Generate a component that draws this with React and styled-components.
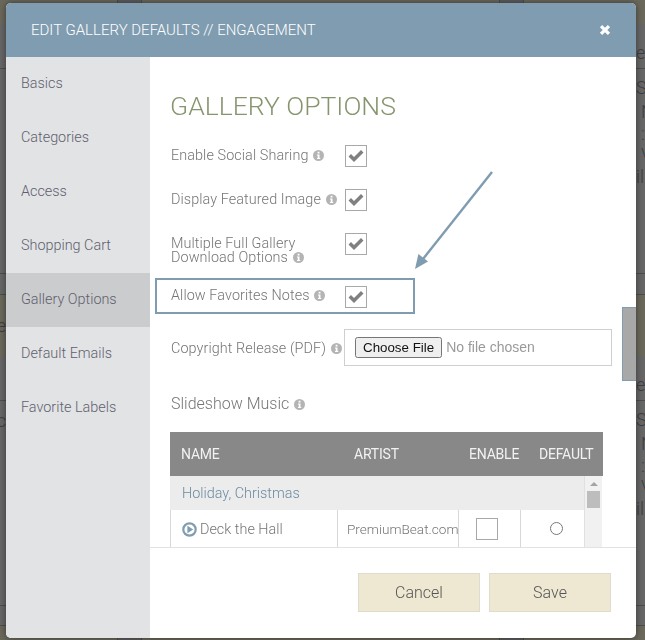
import React from 'react'
import styled, { createGlobalStyle } from 'styled-components'

const GlobalStyle = createGlobalStyle`
  html, body {
    margin: 0;
    padding: 0;
    height: 100%;
    overflow: hidden;
    background: #5e5d58;
  }
  body {
    font-family: Roboto, "Liberation Sans", sans-serif;
  }
`

const NAV_ITEMS = ['Basics', 'Categories', 'Access', 'Shopping Cart', 'Gallery Options', 'Default Emails', 'Favorite Labels']

function InfoIcon() {
  return (
    <InfoSvg viewBox="0 0 10 10">
      <circle cx="5" cy="5" r="5" fill="#b4b4b4" />
      <rect x="4.2" y="1.6" width="1.7" height="1.6" fill="#fff" />
      <path d="M3.6 4h2.3v3.2h.7v1H3.6v-1h.7V5h-.7z" fill="#fff" />
    </InfoSvg>
  )
}

function CheckMark() {
  return (
    <svg width="16" height="14" viewBox="0 0 16 14">
      <path d="M.5 7.5L3 5l3 3 7-7 2.5 2.5L6 13z" fill="#808080" />
    </svg>
  )
}

function PlayIcon() {
  return (
    <svg width="15" height="15" viewBox="0 0 15 15">
      <circle cx="7.5" cy="7.5" r="6.2" fill="none" stroke="#7f9cb0" strokeWidth="2.2" />
      <path d="M5.4 3.8l5.8 3.7-5.8 3.7z" fill="#7f9cb0" />
    </svg>
  )
}

function Option({ label, highlight, tall }) {
  return (
    <OptionRow $highlight={highlight} $tall={tall}>
      <OptionLabel $top={highlight ? 3 : 4}>
        {label} <InfoIcon />
      </OptionLabel>
      <CheckBox><CheckMark /></CheckBox>
    </OptionRow>
  )
}

function EdgeNotes() {
  return (
    <EdgeText $pad={7}>
      <Note $h={24}>S</Note>
      <Note $h={24} $inset={5}>N</Note>
      <Note $h={20} $inset={5}>:</Note>
      <Note $h={16} $inset={5}>v</Note>
      <Note $h={34}>il</Note>
    </EdgeText>
  )
}

// the dimmed page that shows beside the modal
function Backdrop() {
  return (
    <Page>
      <Band $h={24} $tone="brown">
        <TopCell $left={117} />
        <TopCell $left={499} />
      </Band>
      <Band $h={45} $line>
        <EdgeText><Note $h={58}>e</Note></EdgeText>
      </Band>
      <Band $h={205} $line>
        <EdgeNotes />
      </Band>
      <Band $h={21} $line />
      <Band $h={61} $tone="brown">
        <LeftText>e</LeftText>
      </Band>
      <Band $h={45} $line>
        <EdgeText><Note $h={58}>e</Note></EdgeText>
      </Band>
      <Band $h={205} $line>
        <LeftText $h={38}>c</LeftText>
        <EdgeNotes />
      </Band>
      <Band $h={20} $line />
      <Band $h={14} $tone="brown">
        <TopCell $left={117} />
        <TopCell $left={499} />
      </Band>
    </Page>
  )
}

export default function App() {
  return (
    <>
      <GlobalStyle />
      <Backdrop />
      <Modal>
        <Header>
          <Title>EDIT GALLERY DEFAULTS // ENGAGEMENT</Title>
          <Close viewBox="0 0 12 12">
            <path d="M.9 3.2l2.3-2.3L6 3.7 8.8.9l2.3 2.3L8.3 6l2.8 2.8-2.3 2.3L6 8.3l-2.8 2.8L.9 8.8 3.7 6z" fill="#fff" />
          </Close>
        </Header>
        <Body>
          <Sidebar>
            {NAV_ITEMS.map((item) => (
              <NavItem key={item} $active={item === 'Gallery Options'}>{item}</NavItem>
            ))}
          </Sidebar>
          <Main>
            <Content>
              <Heading>GALLERY OPTIONS</Heading>
              <Option label="Enable Social Sharing" />
              <Option label="Display Featured Image" />
              <Option label={<>Multiple Full Gallery<br />Download Options</>} tall />
              <Option label="Allow Favorites Notes" highlight />
              <FileRow>
                <OptionLabel $top={2}>Copyright Release (PDF) <InfoIcon /></OptionLabel>
                <FileBox><input type="file" /></FileBox>
              </FileRow>
              <SubHeading>Slideshow Music <InfoIcon /></SubHeading>
              <MusicTable>
                <TableHead>
                  <HeadCell>NAME</HeadCell>
                  <HeadCell>ARTIST</HeadCell>
                  <HeadCell>ENABLE</HeadCell>
                  <HeadCell>DEFAULT</HeadCell>
                </TableHead>
                <TableBody>
                  <Rows>
                    <GroupRow>Holiday, Christmas</GroupRow>
                    <TrackRow>
                      <TrackCell><PlayIcon /> Deck the Hall</TrackCell>
                      <ArtistCell>PremiumBeat.com</ArtistCell>
                      <BoxCell><EmptyBox /></BoxCell>
                      <RadioCell><Radio /></RadioCell>
                    </TrackRow>
                  </Rows>
                  <ScrollTrack>
                    <ScrollArrow />
                    <ScrollThumb />
                  </ScrollTrack>
                </TableBody>
              </MusicTable>
            </Content>
            <Footer>
              <FooterButton>Cancel</FooterButton>
              <FooterButton>Save</FooterButton>
            </Footer>
          </Main>
        </Body>
      </Modal>
      <Arrow width="90" height="110" viewBox="0 0 90 110">
        <path d="M78 1L9 88" stroke="#7f9cb0" strokeWidth="2.4" fill="none" />
        <path d="M1 98l3.4-15L14 90.5z" fill="#7f9cb0" />
      </Arrow>
      <SideTab />
    </>
  )
}

const Page = styled.div`
  width: 645px;
  height: 640px;
  overflow: hidden;
  font-size: 18px;
  font-weight: 300;
  color: #3d3d40;
`

const Band = styled.div`
  height: ${(props) => props.$h}px;
  box-sizing: border-box;
  display: flex;
  position: relative;
  background: ${(props) => (props.$tone === 'brown' ? '#6a675b' : '#666')};
  border-bottom: ${(props) => (props.$line ? '1px solid #4d4d4d' : 'none')};
`

const TopCell = styled.div`
  position: absolute;
  left: ${(props) => props.$left}px;
  top: 0;
  bottom: 0;
  width: 23px;
  background: #5c5c5c;
  border-left: 1px solid #4d4d4d;
  border-right: 1px solid #4d4d4d;
`

const EdgeText = styled.div`
  margin-left: auto;
  width: 9px;
  padding-top: ${(props) => props.$pad || 0}px;
  overflow: hidden;
`

const LeftText = styled.div`
  width: 6px;
  height: ${(props) => (props.$h ? `${props.$h}px` : 'auto')};
  display: flex;
  align-items: center;
  justify-content: flex-end;
  overflow: hidden;
`

const Note = styled.div`
  height: ${(props) => props.$h}px;
  line-height: ${(props) => props.$h}px;
  padding-left: ${(props) => props.$inset || 0}px;
`

const Modal = styled.div`
  position: fixed;
  left: 6px;
  top: 3px;
  width: 630px;
  height: 635px;
  display: flex;
  flex-direction: column;
  background: #fff;
  border-radius: 5px;
  overflow: hidden;
  box-shadow: 0 0 6px rgba(0, 0, 0, 0.45);
`

const Header = styled.div`
  height: 54px;
  flex: none;
  display: flex;
  align-items: center;
  justify-content: space-between;
  padding: 0 25px;
  background: #7f9cb0;
`

const Title = styled.div`
  color: #fff;
  font-size: 15px;
  font-weight: 300;
`

const Close = styled.svg`
  width: 12px;
  height: 12px;
`

const Body = styled.div`
  flex: 1;
  display: flex;
  min-height: 0;
`

const Sidebar = styled.div`
  width: 144px;
  flex: none;
  background: #e2e3e5;
`

const NavItem = styled.div`
  height: 54px;
  box-sizing: border-box;
  padding: 0 0 2px 15px;
  display: flex;
  align-items: center;
  font-size: 14.4px;
  font-weight: 300;
  color: #5f5f6e;
  background: ${(props) => (props.$active ? '#cbcccd' : 'transparent')};
`

const Main = styled.div`
  flex: 1;
  display: flex;
  flex-direction: column;
  min-width: 0;
`

const Content = styled.div`
  height: 491px;
  flex: none;
  overflow: hidden;
  padding: 34px 24px 0 15px;
  box-sizing: border-box;
  border-bottom: 1px solid #e2e2e2;
`

const Heading = styled.h2`
  margin: 0 0 24px 5px;
  font-size: 26.5px;
  line-height: 30px;
  font-weight: 300;
  color: #87956f;
`

const OptionRow = styled.div`
  display: flex;
  align-items: flex-start;
  box-sizing: border-box;
  width: ${(props) => (props.$highlight ? '260px' : 'auto')};
  height: ${(props) => (props.$highlight ? '36px' : '22px')};
  margin: ${(props) => {
    if (props.$highlight) return '0 0 15px -10px'
    return props.$tall ? '0 0 23px' : '0 0 22px'
  }};
  padding: ${(props) => (props.$highlight ? '6px 0 0 14px' : '0 0 0 6px')};
  border: ${(props) => (props.$highlight ? '2px solid #7f9cb0' : 'none')};
`

const OptionLabel = styled.div`
  width: 174px;
  flex: none;
  padding-top: ${(props) => props.$top}px;
  font-size: 14.4px;
  font-weight: 300;
  letter-spacing: 0.08px;
  line-height: 14px;
  color: #757575;
`

const InfoSvg = styled.svg`
  width: 11px;
  height: 11px;
  vertical-align: -1px;
  margin-left: 1px;
`

const CheckBox = styled.div`
  width: 22px;
  height: 22px;
  box-sizing: border-box;
  flex: none;
  display: flex;
  align-items: center;
  justify-content: center;
  border: 1px solid #a8a8a8;
`

const FileRow = styled.div`
  display: flex;
  align-items: center;
  padding-left: 6px;
  margin-bottom: 29px;
`

const FileBox = styled.div`
  width: 268px;
  height: 37px;
  box-sizing: border-box;
  flex: none;
  display: flex;
  align-items: center;
  padding-left: 10px;
  border: 1px solid #cfcfcf;
  margin-left: -1px;

  input {
    font-family: "Liberation Sans", Arial, sans-serif;
    font-size: 14px;
    color: #999;
    width: 250px;
  }

  input::file-selector-button {
    font-size: 13.33px;
    color: #111;
  }
`

const SubHeading = styled.div`
  margin: 0 0 19px 6px;
  font-size: 16px;
  font-weight: 300;
  line-height: 18px;
  color: #757575;
`

const MusicTable = styled.div`
  margin-left: 5px;
  width: 433px;
`

const TableHead = styled.div`
  display: grid;
  grid-template-columns: 173px 115px 70px 75px;
  height: 44px;
  align-items: center;
  background: #888;
`

const HeadCell = styled.div`
  padding-left: 11px;
  font-size: 14px;
  font-weight: 400;
  letter-spacing: -0.2px;
  color: #f2f2f2;
`

const TableBody = styled.div`
  display: flex;
  height: 72px;
`

const Rows = styled.div`
  flex: 1;
  min-width: 0;
`

const GroupRow = styled.div`
  height: 34px;
  display: flex;
  align-items: center;
  padding-left: 12px;
  box-sizing: border-box;
  font-size: 14.4px;
  font-weight: 300;
  color: #6b8ba1;
  background: #ececec;
`

const TrackRow = styled.div`
  display: grid;
  grid-template-columns: 167px 121px 62px 1fr;
  height: 38px;
  border-left: 1px solid #d8d8d8;
`

const TrackCell = styled.div`
  display: flex;
  align-items: center;
  gap: 3px;
  padding-left: 11px;
  font-size: 14.4px;
  font-weight: 300;
  white-space: nowrap;
  overflow: hidden;
  color: #757575;
  border-right: 1px solid #d8d8d8;
`

const ArtistCell = styled(TrackCell)`
  padding-left: 9px;
  font-size: 13.6px;
`

const BoxCell = styled(TrackCell)`
  justify-content: center;
  padding: 0 6px 0 0;
`

const RadioCell = styled.div`
  display: flex;
  justify-content: center;
  padding: 12px 0 0 8px;
`

const EmptyBox = styled.div`
  width: 22px;
  height: 22px;
  box-sizing: border-box;
  border: 1px solid #a8a8a8;
`

const Radio = styled.div`
  width: 13px;
  height: 13px;
  box-sizing: border-box;
  border-radius: 50%;
  border: 1px solid #777;
`

const ScrollTrack = styled.div`
  width: 17px;
  flex: none;
  margin-right: 1px;
  display: flex;
  flex-direction: column;
  align-items: center;
  background: #f1f1f1;
  border-left: 1px solid #e0e0e0;
`

const ScrollArrow = styled.div`
  margin: 6px 0 5px;
  border-left: 4px solid transparent;
  border-right: 4px solid transparent;
  border-bottom: 4px solid #a3a3a3;
`

const ScrollThumb = styled.div`
  width: 13px;
  height: 17px;
  background: #bdbdbd;
`

const Footer = styled.div`
  flex: 1;
  display: flex;
  justify-content: flex-end;
  gap: 9px;
  padding: 25px 25px 0 0;
`

const FooterButton = styled.button`
  width: 122px;
  height: 39px;
  border: 1px solid #e0dccb;
  background: #eee8d2;
  font-family: inherit;
  font-size: 16px;
  font-weight: 300;
  color: #555;
`

const Arrow = styled.svg`
  position: fixed;
  left: 414px;
  top: 171px;
`

const SideTab = styled.div`
  position: fixed;
  left: 622px;
  top: 307px;
  width: 14px;
  height: 74px;
  box-sizing: border-box;
  background: #a8a8a8;
  border: 1px solid #7f9cb0;
  border-right: none;
`
